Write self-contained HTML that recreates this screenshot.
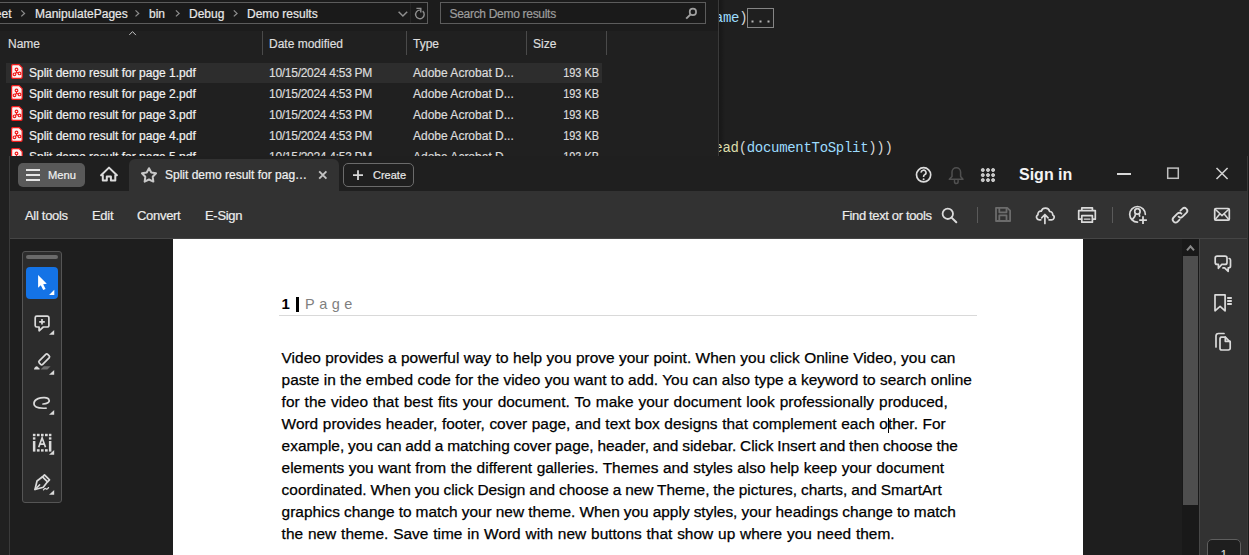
<!DOCTYPE html>
<html><head><meta charset="utf-8">
<style>
*{margin:0;padding:0;box-sizing:border-box}
html,body{width:1249px;height:555px;overflow:hidden;background:#202020;font-family:"Liberation Sans",sans-serif}
.a{position:absolute;white-space:nowrap}
#rows div,#bc span,.w{-webkit-text-stroke:0.2px currentColor}
.pl{left:281.6px;font-size:15.45px;line-height:18px;color:#000;-webkit-text-stroke:0.25px #000}
svg{position:absolute;overflow:visible}
</style></head><body>
<!-- ============ EXPLORER ============ -->
<div class="a" style="left:0;top:0;width:718px;height:31px;background:#1c1c1c"></div>
<div class="a" style="left:0;top:31px;width:718px;height:125px;background:#202020"></div>
<!-- breadcrumb box -->
<div class="a" style="left:-5px;top:2px;width:433px;height:22px;border:1px solid #5c5c5c;background:#1a1a1a"></div>
<div class="a" style="left:410px;top:3px;width:1px;height:20px;background:#252525"></div>
<div id="bc" class="a" style="left:0;top:6.5px;font-size:12px;color:#e8e8e8;line-height:15px">
<span class="a" style="left:-5.2px">eet</span>
<span class="a" style="left:35px">ManipulatePages</span>
<span class="a" style="left:149px">bin</span>
<span class="a" style="left:189px">Debug</span>
<span class="a" style="left:247px">Demo results</span>
</div>
<svg width="1" height="1" style="left:0;top:0">
<g fill="none" stroke="#8c8c8c" stroke-width="1.3">
<path d="M21.3 10.4l3.2 3-3.2 3"/><path d="M135.5 10.4l3.2 3-3.2 3"/><path d="M175.9 10.4l3.2 3-3.2 3"/><path d="M233.8 10.4l3.2 3-3.2 3"/>
</g>
<path d="M398.6 11.7l4.3 4.3 4.3-4.3" fill="none" stroke="#8e8e8e" stroke-width="1.5"/>
<path d="M422.66 11.1A4.3 4.3 0 1 1 419.9 10.1" fill="none" stroke="#8e8e8e" stroke-width="1.4"/>
<path d="M416.4 8.4H420.8V12.6" fill="none" stroke="#8e8e8e" stroke-width="1.4"/>
</svg>
<!-- search box -->
<div class="a" style="left:440px;top:2px;width:266px;height:22px;border:1px solid #5c5c5c;background:#1a1a1a"></div>
<div class="a w" style="left:449.5px;top:6.5px;font-size:12px;color:#9d9d9d;line-height:15px;letter-spacing:-0.3px">Search Demo results</div>
<svg width="1" height="1" style="left:0;top:0">
<circle cx="692.9" cy="11.9" r="3.2" fill="none" stroke="#a0a0a0" stroke-width="1.7"/>
<path d="M690.6 14.3L686.2 18.7" stroke="#a0a0a0" stroke-width="1.9"/>
</svg>
<!-- column header -->
<div class="a w" style="left:8px;top:37px;font-size:12px;color:#dedede;line-height:15px">Name</div>
<div class="a w" style="left:269px;top:37px;font-size:12px;color:#dedede;line-height:15px">Date modified</div>
<div class="a w" style="left:413px;top:37px;font-size:12px;color:#dedede;line-height:15px">Type</div>
<div class="a w" style="left:533px;top:37px;font-size:12px;color:#dedede;line-height:15px">Size</div>
<svg width="1" height="1" style="left:0;top:0">
<path d="M129.3 34.9L132.5 31.6L135.9 35.1" fill="none" stroke="#c4c4c4" stroke-width="1"/>
</svg>
<div class="a" style="left:262px;top:31px;width:1px;height:24px;background:#4a4a4a"></div>
<div class="a" style="left:406px;top:31px;width:1px;height:24px;background:#4a4a4a"></div>
<div class="a" style="left:526px;top:31px;width:1px;height:24px;background:#4a4a4a"></div>
<div class="a" style="left:606px;top:31px;width:1px;height:24px;background:#4a4a4a"></div>
<!-- rows -->
<div class="a" style="left:6px;top:63px;width:596px;height:20px;background:#2d2d2d"></div>
<div id="rows"><svg width="12" height="15" style="left:11px;top:64px" viewBox="0 0 12 15"><path d="M1.9 0.6H8.1L11.2 3.7V13.1a1.3 1.3 0 0 1 -1.3 1.3H1.9a1.3 1.3 0 0 1 -1.3 -1.3V1.9a1.3 1.3 0 0 1 1.3 -1.3Z" fill="#fdf2f2" stroke="#f01a1a" stroke-width="1.2"/><g fill="none" stroke="#f01a1a" stroke-width="1.15"><circle cx="5.5" cy="5.4" r="1.35"/><circle cx="3.5" cy="10.3" r="1.35"/><circle cx="8.5" cy="9.4" r="1.35"/><path d="M5.5 6.8V8.4M5.5 8.4L4.4 9.3M5.5 8.4L7.2 9"/></g></svg>
<div class="a" style="left:29px;top:66px;font-size:12px;color:#f2f2f2;line-height:15px">Split demo result for page 1.pdf</div>
<div class="a" style="left:269px;top:66px;font-size:12px;color:#dcdcdc;line-height:15px;letter-spacing:-0.28px">10/15/2024 4:53 PM</div>
<div class="a" style="left:413px;top:66px;font-size:12px;color:#dcdcdc;line-height:15px">Adobe Acrobat D...</div>
<div class="a" style="left:519px;width:80px;text-align:right;top:66px;font-size:12px;color:#dcdcdc;line-height:15px;transform:scaleX(0.91);transform-origin:100% 50%">193 KB</div>
<svg width="12" height="15" style="left:11px;top:85px" viewBox="0 0 12 15"><path d="M1.9 0.6H8.1L11.2 3.7V13.1a1.3 1.3 0 0 1 -1.3 1.3H1.9a1.3 1.3 0 0 1 -1.3 -1.3V1.9a1.3 1.3 0 0 1 1.3 -1.3Z" fill="#fdf2f2" stroke="#f01a1a" stroke-width="1.2"/><g fill="none" stroke="#f01a1a" stroke-width="1.15"><circle cx="5.5" cy="5.4" r="1.35"/><circle cx="3.5" cy="10.3" r="1.35"/><circle cx="8.5" cy="9.4" r="1.35"/><path d="M5.5 6.8V8.4M5.5 8.4L4.4 9.3M5.5 8.4L7.2 9"/></g></svg>
<div class="a" style="left:29px;top:87px;font-size:12px;color:#f2f2f2;line-height:15px">Split demo result for page 2.pdf</div>
<div class="a" style="left:269px;top:87px;font-size:12px;color:#dcdcdc;line-height:15px;letter-spacing:-0.28px">10/15/2024 4:53 PM</div>
<div class="a" style="left:413px;top:87px;font-size:12px;color:#dcdcdc;line-height:15px">Adobe Acrobat D...</div>
<div class="a" style="left:519px;width:80px;text-align:right;top:87px;font-size:12px;color:#dcdcdc;line-height:15px;transform:scaleX(0.91);transform-origin:100% 50%">193 KB</div>
<svg width="12" height="15" style="left:11px;top:106px" viewBox="0 0 12 15"><path d="M1.9 0.6H8.1L11.2 3.7V13.1a1.3 1.3 0 0 1 -1.3 1.3H1.9a1.3 1.3 0 0 1 -1.3 -1.3V1.9a1.3 1.3 0 0 1 1.3 -1.3Z" fill="#fdf2f2" stroke="#f01a1a" stroke-width="1.2"/><g fill="none" stroke="#f01a1a" stroke-width="1.15"><circle cx="5.5" cy="5.4" r="1.35"/><circle cx="3.5" cy="10.3" r="1.35"/><circle cx="8.5" cy="9.4" r="1.35"/><path d="M5.5 6.8V8.4M5.5 8.4L4.4 9.3M5.5 8.4L7.2 9"/></g></svg>
<div class="a" style="left:29px;top:108px;font-size:12px;color:#f2f2f2;line-height:15px">Split demo result for page 3.pdf</div>
<div class="a" style="left:269px;top:108px;font-size:12px;color:#dcdcdc;line-height:15px;letter-spacing:-0.28px">10/15/2024 4:53 PM</div>
<div class="a" style="left:413px;top:108px;font-size:12px;color:#dcdcdc;line-height:15px">Adobe Acrobat D...</div>
<div class="a" style="left:519px;width:80px;text-align:right;top:108px;font-size:12px;color:#dcdcdc;line-height:15px;transform:scaleX(0.91);transform-origin:100% 50%">193 KB</div>
<svg width="12" height="15" style="left:11px;top:127px" viewBox="0 0 12 15"><path d="M1.9 0.6H8.1L11.2 3.7V13.1a1.3 1.3 0 0 1 -1.3 1.3H1.9a1.3 1.3 0 0 1 -1.3 -1.3V1.9a1.3 1.3 0 0 1 1.3 -1.3Z" fill="#fdf2f2" stroke="#f01a1a" stroke-width="1.2"/><g fill="none" stroke="#f01a1a" stroke-width="1.15"><circle cx="5.5" cy="5.4" r="1.35"/><circle cx="3.5" cy="10.3" r="1.35"/><circle cx="8.5" cy="9.4" r="1.35"/><path d="M5.5 6.8V8.4M5.5 8.4L4.4 9.3M5.5 8.4L7.2 9"/></g></svg>
<div class="a" style="left:29px;top:129px;font-size:12px;color:#f2f2f2;line-height:15px">Split demo result for page 4.pdf</div>
<div class="a" style="left:269px;top:129px;font-size:12px;color:#dcdcdc;line-height:15px;letter-spacing:-0.28px">10/15/2024 4:53 PM</div>
<div class="a" style="left:413px;top:129px;font-size:12px;color:#dcdcdc;line-height:15px">Adobe Acrobat D...</div>
<div class="a" style="left:519px;width:80px;text-align:right;top:129px;font-size:12px;color:#dcdcdc;line-height:15px;transform:scaleX(0.91);transform-origin:100% 50%">193 KB</div>
<svg width="12" height="15" style="left:11px;top:148px" viewBox="0 0 12 15"><path d="M1.9 0.6H8.1L11.2 3.7V13.1a1.3 1.3 0 0 1 -1.3 1.3H1.9a1.3 1.3 0 0 1 -1.3 -1.3V1.9a1.3 1.3 0 0 1 1.3 -1.3Z" fill="#fdf2f2" stroke="#f01a1a" stroke-width="1.2"/><g fill="none" stroke="#f01a1a" stroke-width="1.15"><circle cx="5.5" cy="5.4" r="1.35"/><circle cx="3.5" cy="10.3" r="1.35"/><circle cx="8.5" cy="9.4" r="1.35"/><path d="M5.5 6.8V8.4M5.5 8.4L4.4 9.3M5.5 8.4L7.2 9"/></g></svg>
<div class="a" style="left:29px;top:150px;font-size:12px;color:#f2f2f2;line-height:15px">Split demo result for page 5.pdf</div>
<div class="a" style="left:269px;top:150px;font-size:12px;color:#dcdcdc;line-height:15px;letter-spacing:-0.28px">10/15/2024 4:53 PM</div>
<div class="a" style="left:413px;top:150px;font-size:12px;color:#dcdcdc;line-height:15px">Adobe Acrobat D...</div>
<div class="a" style="left:519px;width:80px;text-align:right;top:150px;font-size:12px;color:#dcdcdc;line-height:15px;transform:scaleX(0.91);transform-origin:100% 50%">193 KB</div></div><!--e-->
<!-- explorer right edge -->
<div class="a" style="left:718px;top:0;width:1px;height:156px;background:#3a3a3a"></div>

<!-- ============ VS CODE ============ -->
<div class="a" style="left:719px;top:0;width:530px;height:156px;background:#1f1f1f"></div><div class="a" style="left:719px;top:0;width:6px;height:156px;background:linear-gradient(to right,rgba(0,0,0,0.28),rgba(0,0,0,0))"></div>
<div class="a" style="left:719px;top:0;width:530px;height:156px;overflow:hidden"><div class="a" style="left:-4.2px;top:9.3px;font-family:'Liberation Mono',monospace;font-size:14px;letter-spacing:-0.3px;line-height:18px;color:#9cdcfe">ame<span style="color:#d4d4d4">)</span></div>
<div class="a" style="left:28px;top:8px;width:27px;height:20px;border:1px solid #858585"></div>
<div class="a" style="left:-4.7px;top:138.8px;font-family:'Liberation Mono',monospace;font-size:14px;letter-spacing:-0.3px;line-height:18px;color:#9cdcfe"><span style="color:#dcdcaa">ead</span><span style="color:#d4d4d4">(</span>documentToSplit<span style="color:#d4d4d4">)))</span></div></div>

<!-- ============ ACROBAT ============ -->
<div class="a" style="left:9px;top:156px;width:1240px;height:399px;background:#1e1e1e"></div>
<div class="a" style="left:9px;top:156px;width:1px;height:399px;background:#3a3a3a"></div>
<!-- title bar -->
<div class="a" style="left:10px;top:156px;width:1239px;height:35px;background:#1f1f1f"></div>
<div class="a" style="left:18px;top:163px;width:67px;height:24px;border-radius:5px;background:#595959"></div>
<div class="a" style="left:26px;top:169px;width:14px;height:2px;background:#e6e6e6"></div>
<div class="a" style="left:26px;top:174px;width:14px;height:2px;background:#e6e6e6"></div>
<div class="a" style="left:26px;top:179px;width:14px;height:2px;background:#e6e6e6"></div>
<div class="a w" style="left:48px;top:168px;font-size:11.2px;color:#f0f0f0;line-height:14px">Menu</div>
<!-- tab -->
<div class="a" style="left:129px;top:159px;width:210px;height:32px;border-radius:6px 6px 0 0;background:#323232"></div>
<div class="a w" style="left:165px;top:168px;font-size:12px;color:#f0f0f0;line-height:15px">Split demo result for pag…</div>
<!-- create -->
<div class="a" style="left:343px;top:163px;width:71px;height:24px;border-radius:5px;border:1px solid #6b6b6b"></div>
<div class="a w" style="left:373px;top:168px;font-size:11px;color:#e8e8e8;line-height:14px">Create</div>
<!-- right title -->
<div class="a" style="left:1019px;top:166px;font-size:16px;font-weight:bold;color:#f4f4f4;line-height:18px">Sign in</div>
<!-- toolbar -->
<div class="a" style="left:10px;top:191px;width:1239px;height:47px;background:#323232"></div>
<div class="a" style="left:10px;top:238px;width:1239px;height:1px;background:#454545"></div>
<div class="a w" style="left:25px;top:208px;font-size:13px;color:#ececec;line-height:15px;letter-spacing:-0.3px">All tools</div>
<div class="a w" style="left:92px;top:208px;font-size:13px;color:#ececec;line-height:15px;letter-spacing:-0.3px">Edit</div>
<div class="a w" style="left:137px;top:208px;font-size:13px;color:#ececec;line-height:15px;letter-spacing:-0.3px">Convert</div>
<div class="a w" style="left:205px;top:208px;font-size:13px;color:#ececec;line-height:15px;letter-spacing:-0.3px">E-Sign</div>
<div class="a w" style="left:842px;top:208px;font-size:13px;color:#ececec;line-height:15px;letter-spacing:-0.36px">Find text or tools</div>
<div class="a" style="left:977px;top:207px;width:1px;height:16px;background:#5a5a5a"></div>
<div class="a" style="left:1112px;top:207px;width:1px;height:16px;background:#5a5a5a"></div>

<!-- page -->
<div class="a" style="left:173px;top:239px;width:910px;height:316px;background:#ffffff"></div>
<div id="pdf"><div class="a" style="left:281.6px;top:295.5px;font-size:15px;font-weight:bold;color:#000;line-height:16px">1</div>
<div class="a" style="left:296.4px;top:296.8px;width:2.2px;height:14.8px;background:#000"></div>
<div class="a" style="left:305px;top:296px;font-size:14.5px;color:#7f7f7f;line-height:16px;letter-spacing:4.5px">Page</div>
<div class="a" style="left:279px;top:315px;width:698px;height:1px;background:#d9d9d9"></div>
<div class="a" style="left:888px;top:418px;width:1px;height:15px;background:#000"></div>
<div class="a pl" style="top:348.8px;word-spacing:0.139px">Video provides a powerful way to help you prove your point. When you click Online Video, you can</div>
<div class="a pl" style="top:370.9px;word-spacing:0.058px">paste in the embed code for the video you want to add. You can also type a keyword to search online</div>
<div class="a pl" style="top:392.9px;word-spacing:0.711px">for the video that best fits your document. To make your document look professionally produced,</div>
<div class="a pl" style="top:415.0px;word-spacing:0.321px">Word provides header, footer, cover page, and text box designs that complement each other. For</div>
<div class="a pl" style="top:437.0px;word-spacing:-0.534px">example, you can add a matching cover page, header, and sidebar. Click Insert and then choose the</div>
<div class="a pl" style="top:459.1px;word-spacing:0.222px">elements you want from the different galleries. Themes and styles also help keep your document</div>
<div class="a pl" style="top:481.2px;word-spacing:-0.391px">coordinated. When you click Design and choose a new Theme, the pictures, charts, and SmartArt</div>
<div class="a pl" style="top:503.2px;word-spacing:-0.241px">graphics change to match your new theme. When you apply styles, your headings change to match</div>
<div class="a pl" style="top:525.3px;word-spacing:0.570px">the new theme. Save time in Word with new buttons that show up where you need them.</div></div><!--e-->

<!-- scrollbar -->
<div class="a" style="left:1182px;top:239px;width:17px;height:316px;background:#191919"></div>
<div class="a" style="left:1183px;top:256px;width:15px;height:249px;background:#4e4e4e"></div>
<!-- right panel -->
<div class="a" style="left:1199px;top:239px;width:1px;height:316px;background:#474747"></div>
<div class="a" style="left:1200px;top:239px;width:47px;height:316px;background:#323232"></div>
<div class="a" style="left:1247px;top:156px;width:1px;height:399px;background:#383838"></div><div class="a" style="left:1248px;top:156px;width:1px;height:399px;background:#1b1b1b"></div>
<div class="a" style="left:1207px;top:539px;width:34px;height:24px;border-radius:5px;border:1px solid #5e5e5e;background:#1e1e1e"></div>
<div class="a" style="left:1220.5px;top:548px;font-size:12px;color:#e0e0e0;line-height:15px">1</div>

<!-- tool rail -->
<div class="a" style="left:22px;top:251px;width:40px;height:252px;border-radius:3px;border:1px solid #555;background:#2c2c2c"></div>
<div class="a" style="left:26px;top:255px;width:32px;height:4px;border-radius:2px;background:#6a6a6a"></div>
<div class="a" style="left:26px;top:267px;width:32px;height:32px;border-radius:4px;background:#1473e6"></div>

<div id="icons"><svg width="1" height="1" style="left:0;top:0">
<g fill="none" stroke="#dcdcdc" stroke-width="1.8" stroke-linejoin="round" stroke-linecap="round">
<!-- home -->
<path stroke-width="2" d="M106.8 180.6V176.4H110.9V180.6H115.3V175.2H116.9L109 167.6L101.1 175.2H102.8V180.6Z"/>
<!-- star -->
<path stroke="#c8c8c8" stroke-width="2" d="M149.00 168.20 L151.29 172.44 L156.04 173.31 L152.71 176.81 L153.35 181.59 L149.00 179.50 L144.65 181.59 L145.29 176.81 L141.96 173.31 L146.71 172.44Z"/>
<!-- tab close -->
<path stroke="#c4c4c4" stroke-width="1.9" stroke-linecap="butt" d="M319.2 171.4L326.4 178.6M326.4 171.4L319.2 178.6"/>
<!-- create plus -->
<path stroke="#d8d8d8" stroke-linecap="butt" d="M358 170.2V180M353 175.1H363"/>
<!-- help -->
<circle cx="923.6" cy="174.8" r="7.1" stroke-width="1.7"/>
<!-- bell -->
<path stroke="#505050" stroke-width="1.5" d="M949.3 179.3H963 L960.6 176.5 V172 a4.3 4.3 0 0 0 -8.6 0 V176.5Z M954.5 180.5v1.3a1.8 1.8 0 0 0 3.6 0v-1.3"/>
<!-- minimize -->
<path stroke="#d8d8d8" stroke-width="2" stroke-linecap="butt" d="M1117 174H1131"/>
<!-- maximize -->
<rect x="1167.7" y="168.1" width="10.6" height="10.2" stroke="#c0c0c0" stroke-width="1.5" stroke-linejoin="miter"/>
<!-- close -->
<path stroke="#d0d0d0" stroke-width="1.6" stroke-linecap="butt" d="M1216.5 168L1227.6 179M1227.6 168L1216.5 179"/>
</g>
<path d="M921.2 172.6a2.4 2.4 0 1 1 3.6 2c-0.8 0.5 -1.2 0.9 -1.2 1.8v0.5" fill="none" stroke="#dcdcdc" stroke-width="1.6"/><circle cx="923.6" cy="179.2" r="1" fill="#dcdcdc"/>
<g fill="#c4c4c4" stroke="#dedede" stroke-width="0.8">
<circle cx="982.8" cy="170" r="1.55"/><circle cx="988" cy="170" r="1.55"/><circle cx="993.1" cy="170" r="1.55"/>
<circle cx="982.8" cy="175.1" r="1.55"/><circle cx="988" cy="175.1" r="1.55"/><circle cx="993.1" cy="175.1" r="1.55"/>
<circle cx="982.8" cy="180.1" r="1.55"/><circle cx="988" cy="180.1" r="1.55"/><circle cx="993.1" cy="180.1" r="1.55"/>
</g>

<!-- toolbar icons -->
<g fill="none" stroke="#dadada" stroke-width="1.7" stroke-linejoin="round" stroke-linecap="round">
<!-- search -->
<circle cx="947.8" cy="213.8" r="5.2" stroke-width="1.8"/>
<path d="M951.6 217.6L956.3 222.3" stroke-width="2"/>
<!-- save -->
<g stroke="#6c6c6c" stroke-width="1.8">
<path d="M996 207.8H1007.2L1010.1 210.7V221H996Z"/>
<path d="M999.3 208v4.3h7.2v-4.3"/>
<path d="M999.3 221v-5.6h7.2v5.6"/>
</g>
<!-- cloud upload -->
<path d="M1040.8 219.8H1039.2a2.7 2.7 0 0 1 -1.2 -5.1a2.9 2.9 0 0 1 3.3 -3.6a4.4 4.4 0 0 1 8.4 0.4a3 3 0 0 1 3 3.4a2.6 2.6 0 0 1 -1.6 4.9H1049"/>
<path d="M1044.9 223.5V214.5M1041.7 217.8L1044.9 214.5L1048.1 217.8"/>
<!-- print -->
<path d="M1081.8 210.2V207.8H1092.4V210.2"/>
<path d="M1081.5 219.2H1078.7V210.6H1095.3V219.2H1092.6"/>
<rect x="1081.8" y="215.7" width="10.6" height="6.5"/>
<path d="M1084.3 219.1H1089.9" stroke-width="1.4"/>
<!-- separators drawn as divs -->
<!-- share -->
<path d="M1137.5 222.1A7.8 7.8 0 1 1 1145.3 214.3"/>
<circle cx="1137.4" cy="211.4" r="2.7"/>
<path d="M1135.7 213.6Q1135.2 217.2 1132.4 219.5M1139.1 213.6L1139.6 216.2"/>
<path d="M1143 216.3V224M1139.2 220.1H1146.9" stroke-linecap="butt" stroke-width="1.8"/>
<!-- link -->
<g transform="translate(1180,215.2) rotate(-45)" stroke-width="1.8">
<path d="M3.5 -2.9H6.15A2.9 2.9 0 0 1 6.15 2.9H0.8A2.9 2.9 0 0 1 -2.1 0"/>
<path d="M-3.5 2.9H-6.15A2.9 2.9 0 0 1 -6.15 -2.9H-0.8A2.9 2.9 0 0 1 2.1 0"/>
</g>
<!-- mail -->
<rect x="1214.7" y="208.5" width="14.6" height="11.7" rx="1.2"/>
<path d="M1215.2 209.2L1222 215.6L1228.8 209.2" stroke-width="1.5"/>
<path d="M1215.2 219.6L1219.6 214.3M1228.8 219.6L1224.4 214.3" stroke-width="1.5"/>
</g>

<!-- rail icons -->
<path fill="#fff" d="M38.1 275.1L38.1 287.8L40.8 285.3L43.2 290L45.6 288.9L43.2 284.3L46.8 283.8Z"/>
<g fill="#dadada">
<path d="M49.1 295H54.3V289.8Z" fill="#fff"/>
<path d="M49 334.8H54.2V329.9Z"/>
<path d="M49 374.8H54.2V369.9Z"/>
<path d="M49 414.8H54.2V409.9Z"/>
<path d="M49 454.8H54.2V449.9Z"/>
<path d="M49 494.8H54.2V489.9Z"/>
</g>
<g fill="none" stroke="#dadada" stroke-width="1.7" stroke-linejoin="round" stroke-linecap="round">
<!-- comment+ -->
<path d="M36.8 316.1H47.3a1.6 1.6 0 0 1 1.6 1.6V325.4a1.6 1.6 0 0 1 -1.6 1.6H43.3L39.1 330.8V327H36.8a1.6 1.6 0 0 1 -1.6 -1.6V317.7a1.6 1.6 0 0 1 1.6 -1.6Z"/>
<path d="M42 319v5.6M39.2 321.8H44.8" stroke-linecap="butt"/>
<!-- highlighter -->
<rect x="-6" y="-2.4" width="12" height="4.8" rx="1.4" transform="translate(44.2 359.4) rotate(-45)"/>
<!-- lasso -->
<path d="M43 404 C47 404 50 402 49 399.8 C48 397.2 42 397.2 38 398.6 C33.2 400.5 32.8 405 36.2 407 C39 408.6 43 408.3 46 408.2"/>
<!-- pen sign -->
<path d="M35 489.5L37 481L42.5 476.8L47.5 481.8L43.3 487.3Z"/>
<path d="M42.5 476.8L44.5 474.8L49.5 479.8L47.5 481.8"/>
<path d="M35 489.5L39.6 484.9" stroke-width="1.5"/>
<path d="M43.5 489.8q1.5 -2 2.5 -1 t2.5 -1.2" stroke-width="1.3"/>
</g>
<path fill="#dadada" d="M34 369.6C34 367.5 35.5 366.2 37 366.2L39.6 368.6V369.6Z"/>
<path fill="#6e6e6e" d="M40.6 369.6L43.8 366.2H50.6L47.4 369.6Z"/>
<!-- text select -->
<g fill="#dadada">
<rect x="32.9" y="433.8" width="2.6" height="2.4"/><rect x="36.9" y="433.8" width="2.7" height="2.4"/><rect x="41" y="433.8" width="2.6" height="2.4"/><rect x="45" y="433.8" width="2.7" height="2.4"/><rect x="48.9" y="433.8" width="2.5" height="2.4"/>
<rect x="32.9" y="437.3" width="2.5" height="2.3"/><rect x="32.9" y="441" width="2.5" height="10.6"/>
<rect x="48.9" y="437.3" width="2.5" height="2.3"/><rect x="48.9" y="441" width="2.5" height="10.6"/>
<rect x="36.9" y="449.2" width="2.7" height="2.4"/><rect x="41" y="449.2" width="2.6" height="2.4"/><rect x="45" y="449.2" width="2.7" height="2.4"/>
</g>
<path d="M38.7 447.2L42.1 437.9L45.5 447.2M39.8 444.1H44.4" fill="none" stroke="#dadada" stroke-width="1.7" stroke-linejoin="miter"/>

<!-- right panel icons -->
<g fill="none" stroke="#dadada" stroke-width="1.7" stroke-linejoin="round" stroke-linecap="round">
<path d="M1217.2 256.1H1225a2 2 0 0 1 2 2V262.4a2 2 0 0 1 -2 2H1221.8L1218.4 268.3V264.4H1217.2a2 2 0 0 1 -2 -2V258.1a2 2 0 0 1 2 -2Z"/>
<path d="M1229.2 258.5a1.6 1.6 0 0 1 1.3 1.6V266a1.9 1.9 0 0 1 -1.9 1.9H1228.2V271.3L1224.6 267.9H1223"/>
<path d="M1215 294.9H1225.1V310.8L1220.1 306.4L1215 310.8Z"/>
<path d="M1227.2 298h4.6M1227.2 301h4.6M1227.2 304h4.6" stroke-width="2" stroke-linecap="butt"/>
<path d="M1216 347V336a2.5 2.5 0 0 1 2.5 -2.5H1224"/>
<path d="M1220.8 337.2H1225.3L1230.2 342.1V348.2a1.8 1.8 0 0 1 -1.8 1.8H1221.8a1.8 1.8 0 0 1 -1.8 -1.8V339a1.8 1.8 0 0 1 1.8 -1.8Z"/>
<path d="M1225.3 337.2V341.3H1230.2"/>
</g>
<!-- scroll up arrow -->
<path d="M1187 250.3L1190.5 246.3L1194 250.3" fill="none" stroke="#8a8a8a" stroke-width="2"/>
<!-- vscode dots -->
<g fill="#b5b5b5"><rect x="751.5" y="20.5" width="2" height="2"/><rect x="759.5" y="20.5" width="2" height="2"/><rect x="767.5" y="20.5" width="2" height="2"/></g>
</svg>
</div><!--e-->
</body></html>
